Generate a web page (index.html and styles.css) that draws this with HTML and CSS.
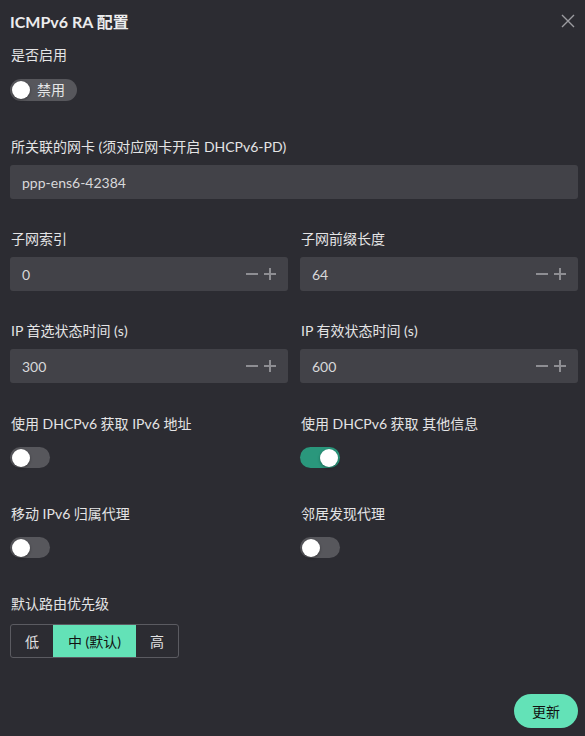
FILE: index.html
```html
<!DOCTYPE html>
<html lang="zh-CN">
<head>
<meta charset="utf-8">
<title>ICMPv6 RA 配置</title>
<link rel="stylesheet" href="styles.css">
</head>
<body>
<div class="modal">
  <div class="header">
    <div class="title">ICMPv6 RA 配置</div>
    <svg class="close" width="14" height="14" viewBox="0 0 14 14"><path d="M1 1L13 13M13 1L1 13" stroke="#9c9ca1" stroke-width="1.4" fill="none"/></svg>
  </div>

  <div class="item item-toggle">
    <div class="label">是否启用</div>
    <div class="switch switch-text"><span class="knob"></span><span class="switch-label">禁用</span></div>
  </div>

  <div class="item item-input">
    <div class="label">所关联的网卡 (须对应网卡开启 DHCPv6-PD)</div>
    <div class="input"><span class="value">ppp-ens6-42384</span></div>
  </div>

  <div class="row">
    <div class="item item-input">
      <div class="label">子网索引</div>
      <div class="input"><span class="value">0</span><span class="steps"><span class="minus"></span><span class="plus"></span></span></div>
    </div>
    <div class="item item-input">
      <div class="label">子网前缀长度</div>
      <div class="input"><span class="value">64</span><span class="steps"><span class="minus"></span><span class="plus"></span></span></div>
    </div>
  </div>

  <div class="row row-last-input">
    <div class="item item-input">
      <div class="label">IP 首选状态时间 (s)</div>
      <div class="input"><span class="value">300</span><span class="steps"><span class="minus"></span><span class="plus"></span></span></div>
    </div>
    <div class="item item-input">
      <div class="label">IP 有效状态时间 (s)</div>
      <div class="input"><span class="value">600</span><span class="steps"><span class="minus"></span><span class="plus"></span></span></div>
    </div>
  </div>

  <div class="row row-toggle">
    <div class="item item-toggle">
      <div class="label">使用 DHCPv6 获取 IPv6 地址</div>
      <div class="switch"><span class="knob"></span></div>
    </div>
    <div class="item item-toggle">
      <div class="label">使用 DHCPv6 获取 其他信息</div>
      <div class="switch on"><span class="knob"></span></div>
    </div>
  </div>

  <div class="row row-toggle">
    <div class="item item-toggle">
      <div class="label">移动 IPv6 归属代理</div>
      <div class="switch"><span class="knob"></span></div>
    </div>
    <div class="item item-toggle">
      <div class="label">邻居发现代理</div>
      <div class="switch"><span class="knob"></span></div>
    </div>
  </div>

  <div class="item item-seg">
    <div class="label">默认路由优先级</div>
    <div class="segmented">
      <span class="seg seg-low">低</span>
      <span class="seg seg-mid active">中 (默认)</span>
      <span class="seg seg-high">高</span>
    </div>
  </div>

  <div class="footer">
    <button class="btn">更新</button>
  </div>
</div>
</body>
</html>
```

FILE: styles.css
```css
* { box-sizing: border-box; }
html, body { margin: 0; padding: 0; }
body {
  background: #2c2c32;
  font-family: Lato, "Noto Sans CJK SC", sans-serif;
  color: #e2e2e3;
  font-size: 14px;
  width: 585px;
  height: 736px;
  overflow: hidden;
}
.modal {
  width: 568px;
  margin-left: 10px;
}
.header {
  height: 45px;
  display: flex;
  align-items: center;
  justify-content: space-between;
  padding-bottom: 1px;
}
.title {
  font-size: 16px;
  font-weight: 700;
  color: #ececed;
  line-height: 20px;
}
.close { margin-right: 3px; margin-top: -2px; }
.label {
  line-height: 20px;
  height: 20px;
  font-size: 14px;
  color: #e4e4e5;
  padding-left: 1px;
  white-space: nowrap;
}
.item-input .label { margin-bottom: 8px; }
.item-toggle .label { margin-bottom: 14px; }
.item-seg .label { margin-bottom: 10px; }

.item-toggle { margin-bottom: 36px; }
.item-input { margin-bottom: 30px; }
.row-last-input .item-input { margin-bottom: 31px; }
.row-toggle .item-toggle .label { margin-bottom: 13px; }
.row-toggle:first-of-type .item-toggle { margin-bottom: 38px; }
.row {
  display: grid;
  grid-template-columns: 278px 278px;
  column-gap: 12px;
}

.input {
  height: 34px;
  background: #424248;
  border-radius: 3px;
  display: flex;
  align-items: center;
  justify-content: space-between;
  padding: 0 12px;
}
.value { color: #d8d8da; font-size: 14px; }
.steps { display: flex; align-items: center; gap: 6px; }
.minus, .plus { position: relative; width: 12px; height: 12px; display: inline-block; }
.minus::before, .plus::before {
  content: ""; position: absolute; left: 0; right: 0; top: 5px; height: 2px; background: #8e8e93;
}
.plus::after {
  content: ""; position: absolute; top: 0; bottom: 0; left: 5px; width: 2px; background: #8e8e93;
}

.switch {
  position: relative;
  width: 40px;
  height: 22px;
  border-radius: 11px;
  background: #57575c;
  display: flex;
  align-items: center;
}
.switch .knob {
  position: absolute;
  left: 2px;
  top: 2px;
  width: 18px;
  height: 18px;
  border-radius: 50%;
  background: #fff;
  box-shadow: 0 1px 3px rgba(0,0,0,0.35);
}
.switch.on { background: #2a977c; }
.switch.on .knob { left: 20px; }
.switch-text { width: 67px; }
.switch-label {
  margin-left: 27px;
  font-size: 14px;
  color: #e6e6e7;
  line-height: 22px;
}
.row-toggle .item-toggle .switch { height: 21px; }
.row-toggle .switch .knob { width: 18px; height: 18px; top: 1.5px; }

.segmented {
  display: inline-flex;
  height: 34px;
  border: 1px solid #5b5b61;
  border-radius: 3px;
  overflow: hidden;
}
.seg {
  display: flex;
  align-items: center;
  justify-content: center;
  font-size: 14px;
  color: #e2e2e3;
}
.seg-low { width: 42px; }
.seg-mid { width: 83px; }
.seg-high { width: 42px; }
.seg.active { background: #63e2b7; color: #111; }

.footer {
  display: flex;
  justify-content: flex-end;
  margin-top: 36px;
}
.btn {
  width: 64px;
  height: 34px;
  border: none;
  border-radius: 17px;
  background: #63e2b7;
  color: #111;
  font-family: Lato, "Noto Sans CJK SC", sans-serif;
  font-size: 14px;
  padding: 0;
}
```
